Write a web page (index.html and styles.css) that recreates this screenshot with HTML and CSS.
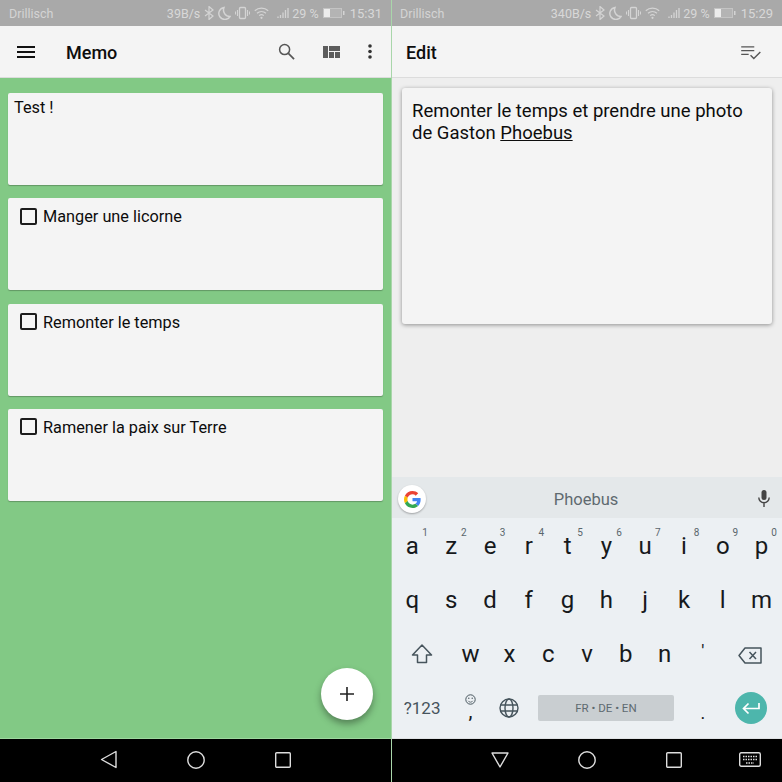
FILE: index.html
```html
<!DOCTYPE html>
<html lang="fr">
<head>
<meta charset="utf-8">
<title>Memo</title>
<link rel="stylesheet" href="styles.css">
</head>
<body>
<div class="screens">
  <section class="phone">
    <div class="status">
      <span class="carrier">Drillisch</span>
      <div class="status-right">
        <span>39B/s</span>
        <svg class="st" width="10" height="14" viewBox="0 0 10 14"><path d="M1 4l8 6-4 3.500V.5l4 3.500-8 6" fill="none" stroke="#d4d4d4" stroke-width="1.200"/></svg>
        <svg class="st" width="13" height="14" viewBox="0 0 13 14"><path d="M6 1.500a6 6 0 1 0 6 9 6.500 6.500 0 0 1-6-9z" fill="none" stroke="#d4d4d4" stroke-width="1.500"/></svg>
        <svg class="st" width="15" height="14" viewBox="0 0 15 14"><rect x="4.500" y="1.500" width="6" height="11" rx="1" fill="none" stroke="#d4d4d4" stroke-width="1.300"/><path d="M2.500 4v6M.5 5.500v3M12.500 4v6M14.500 5.500v3" stroke="#d4d4d4" stroke-width="1.100"/></svg>
        <svg class="st wifi" width="15" height="12" viewBox="0 0 15 12"><path d="M.8 3.800a10 10 0 0 1 13.400 0M3 6.200a7 7 0 0 1 9 0M5.200 8.600a3.600 3.600 0 0 1 4.600 0" fill="none" stroke="#d4d4d4" stroke-width="1.200"/><circle cx="7.500" cy="10.800" r="1.100" fill="#d4d4d4"/></svg>
        <svg class="st signal" width="12" height="12" viewBox="0 0 12 12"><path d="M1 11v-1.500M3.500 11V8M6 11V5.500M8.500 11V3M11 11V1" stroke="#d4d4d4" stroke-width="1.300"/></svg>
        <span class="pct">29 %</span>
        <svg class="st batt" width="22" height="10" viewBox="0 0 22 10"><rect x=".5" y=".5" width="18" height="9" fill="#b4b4b4" stroke="#c4c4c4"/><rect x="1" y="1" width="6" height="8" fill="#ececec"/><rect x="20" y="3" width="1.500" height="4" fill="#d4d4d4"/></svg>
        <span class="clock">15:31</span>
      </div>
    </div>
    <header class="appbar">
      <svg class="menu-icon" width="18" height="12" viewBox="0 0 18 12"><path d="M0 1h18M0 6h18M0 11h18" stroke="#111" stroke-width="1.800"/></svg>
      <h1 class="title memo-title">Memo</h1>
      <div class="actions">
        <svg width="17" height="17" viewBox="0 0 18 18"><circle cx="7" cy="7" r="5.300" fill="none" stroke="#555" stroke-width="1.600"/><path d="M11 11l6 6" stroke="#555" stroke-width="1.800"/></svg>
        <svg width="17" height="12" viewBox="0 0 17 12"><path d="M0 0h5v12H0zM6 0h11v5H6zM6 6h5v6H6zM12 6h5v6h-5z" fill="#5c5c5c"/></svg>
        <svg width="4" height="15" viewBox="0 0 4 15"><circle cx="2" cy="2" r="1.800" fill="#333"/><circle cx="2" cy="7.500" r="1.800" fill="#333"/><circle cx="2" cy="13" r="1.800" fill="#333"/></svg>
      </div>
    </header>
    <main class="board">
      <article class="note"><p class="note-plain">Test !</p></article>
      <article class="note"><label class="todo"><span class="box"></span>Manger une licorne</label></article>
      <article class="note"><label class="todo"><span class="box"></span>Remonter le temps</label></article>
      <article class="note"><label class="todo"><span class="box"></span>Ramener la paix sur Terre</label></article>
      <button class="fab" aria-label="Ajouter"><svg width="14" height="14" viewBox="0 0 14 14"><path d="M7 0v14M0 7h14" stroke="#222" stroke-width="1.600"/></svg></button>
    </main>
    <nav class="navbar">
      <span class="nav-item"><svg width="18" height="19" viewBox="0 0 18 19"><path d="M16 1.500v16L1.500 9.500z" fill="none" stroke="#ddd" stroke-width="1.400" stroke-linejoin="round"/></svg></span>
      <span class="nav-item"><svg width="18" height="18" viewBox="0 0 18 18"><circle cx="9" cy="9" r="8.200" fill="none" stroke="#ddd" stroke-width="1.400"/></svg></span>
      <span class="nav-item"><svg width="16" height="16" viewBox="0 0 16 16"><rect x=".7" y=".7" width="14.600" height="14.600" rx="1" fill="none" stroke="#ddd" stroke-width="1.400"/></svg></span>
    </nav>
  </section>

  <section class="phone phone-edit">
    <div class="status">
      <span class="carrier">Drillisch</span>
      <div class="status-right">
        <span>340B/s</span>
        <svg class="st" width="10" height="14" viewBox="0 0 10 14"><path d="M1 4l8 6-4 3.500V.5l4 3.500-8 6" fill="none" stroke="#d4d4d4" stroke-width="1.200"/></svg>
        <svg class="st" width="13" height="14" viewBox="0 0 13 14"><path d="M6 1.500a6 6 0 1 0 6 9 6.500 6.500 0 0 1-6-9z" fill="none" stroke="#d4d4d4" stroke-width="1.500"/></svg>
        <svg class="st" width="15" height="14" viewBox="0 0 15 14"><rect x="4.500" y="1.500" width="6" height="11" rx="1" fill="none" stroke="#d4d4d4" stroke-width="1.300"/><path d="M2.500 4v6M.5 5.500v3M12.500 4v6M14.500 5.500v3" stroke="#d4d4d4" stroke-width="1.100"/></svg>
        <svg class="st wifi" width="15" height="12" viewBox="0 0 15 12"><path d="M.8 3.800a10 10 0 0 1 13.400 0M3 6.200a7 7 0 0 1 9 0M5.200 8.600a3.600 3.600 0 0 1 4.600 0" fill="none" stroke="#d4d4d4" stroke-width="1.200"/><circle cx="7.500" cy="10.800" r="1.100" fill="#d4d4d4"/></svg>
        <svg class="st signal" width="12" height="12" viewBox="0 0 12 12"><path d="M1 11v-1.500M3.500 11V8M6 11V5.500M8.500 11V3M11 11V1" stroke="#d4d4d4" stroke-width="1.300"/></svg>
        <span class="pct">29 %</span>
        <svg class="st batt" width="22" height="10" viewBox="0 0 22 10"><rect x=".5" y=".5" width="18" height="9" fill="#b4b4b4" stroke="#c4c4c4"/><rect x="1" y="1" width="6" height="8" fill="#ececec"/><rect x="20" y="3" width="1.500" height="4" fill="#d4d4d4"/></svg>
        <span class="clock">15:29</span>
      </div>
    </div>
    <header class="appbar">
      <h1 class="title edit-title">Edit</h1>
      <div class="actions">
        <svg width="20" height="14" viewBox="0 0 21 15"><path d="M0 1h14M0 5h14M0 9h8" stroke="#555" stroke-width="1.400"/><path d="M10 10l3.500 3.500L20.500 6.500" fill="none" stroke="#555" stroke-width="1.500"/></svg>
      </div>
    </header>
    <main class="editor">
      <div class="sheet">Remonter le temps et prendre une photo de Gaston <u>Phoebus</u></div>
    </main>
    <div class="keyboard">
      <div class="suggest">
        <span class="g-badge"><svg width="17" height="17" viewBox="0 0 48 48"><path fill="#EA4335" d="M24 9.500c3.540 0 6.710 1.220 9.210 3.600l6.850-6.850C35.900 2.380 30.470 0 24 0 14.620 0 6.510 5.380 2.560 13.220l7.980 6.190C12.430 13.720 17.740 9.500 24 9.500z"/><path fill="#4285F4" d="M46.980 24.550c0-1.570-.15-3.090-.38-4.550H24v9.020h12.940c-.58 2.960-2.260 5.480-4.780 7.180l7.730 6c4.510-4.180 7.090-10.360 7.090-17.650z"/><path fill="#FBBC05" d="M10.530 28.590c-.48-1.450-.76-2.990-.76-4.590s.27-3.140.76-4.590l-7.980-6.190C.92 16.460 0 20.120 0 24c0 3.880.92 7.540 2.560 10.780l7.970-6.190z"/><path fill="#34A853" d="M24 48c6.480 0 11.930-2.130 15.890-5.810l-7.730-6c-2.150 1.450-4.920 2.300-8.160 2.300-6.260 0-11.570-4.220-13.470-9.910l-7.980 6.190C6.510 42.620 14.620 48 24 48z"/></svg></span>
        <span class="word">Phoebus</span>
        <svg class="mic" width="12" height="17" viewBox="0 0 12 17"><rect x="3.500" y="0" width="5" height="10" rx="2.500" fill="#444"/><path d="M.8 7.500a5.200 5.200 0 0 0 10.400 0M6 12.800V17" fill="none" stroke="#444" stroke-width="1.400"/></svg>
      </div>
      <div class="keys">
        <div class="row">
          <span class="key">a<sup>1</sup></span><span class="key">z<sup>2</sup></span><span class="key">e<sup>3</sup></span><span class="key">r<sup>4</sup></span><span class="key">t<sup>5</sup></span><span class="key">y<sup>6</sup></span><span class="key">u<sup>7</sup></span><span class="key">i<sup>8</sup></span><span class="key">o<sup>9</sup></span><span class="key">p<sup>0</sup></span>
        </div>
        <div class="row">
          <span class="key">q</span><span class="key">s</span><span class="key">d</span><span class="key">f</span><span class="key">g</span><span class="key">h</span><span class="key">j</span><span class="key">k</span><span class="key">l</span><span class="key">m</span>
        </div>
        <div class="row row-mixed">
          <span class="key"><svg width="22" height="20" viewBox="0 0 22 20"><path d="M11 1l9.500 10H15.500v7.500h-9V11H1.500z" fill="none" stroke="#46545c" stroke-width="1.500" stroke-linejoin="round"/></svg></span>
          <span class="key">w</span><span class="key">x</span><span class="key">c</span><span class="key">v</span><span class="key">b</span><span class="key">n</span><span class="key key-quote">'</span>
          <span class="key key-back"><svg width="24" height="17" viewBox="0 0 24 17"><path d="M7 1h16v15H7L1 8.500z" fill="none" stroke="#46545c" stroke-width="1.500" stroke-linejoin="round"/><path d="M11.500 5l6.500 7M18 5l-6.500 7" stroke="#46545c" stroke-width="1.500"/></svg></span>
        </div>
        <div class="row row-bottom">
          <span class="key key-sym">?123</span>
          <span class="key key-emoji"><svg width="11" height="11" viewBox="0 0 11 11"><circle cx="5.500" cy="5.500" r="4.700" fill="none" stroke="#46545c"/><circle cx="3.800" cy="4.300" r=".7" fill="#46545c"/><circle cx="7.200" cy="4.300" r=".7" fill="#46545c"/><path d="M3.200 6.800a2.600 2.600 0 0 0 4.600 0" fill="none" stroke="#46545c" stroke-width=".8"/></svg><span class="comma">,</span></span>
          <span class="key"><svg width="20" height="20" viewBox="0 0 20 20"><g fill="none" stroke="#46545c" stroke-width="1.400"><circle cx="10" cy="10" r="9"/><ellipse cx="10" cy="10" rx="4" ry="9"/><path d="M1.500 7h17M1.500 13h17"/></g></svg></span>
          <span class="space">FR • DE • EN</span>
          <span class="key key-dot">.</span>
          <span class="key key-return"><span class="enter"><svg width="18" height="13" viewBox="0 0 18 13"><path d="M17 1v5.500H2M6.500 1.500l-5 5 5 5" fill="none" stroke="#fff" stroke-width="1.700"/></svg></span></span>
        </div>
      </div>
    </div>
    <nav class="navbar">
      <span class="nav-item"><svg width="18" height="16" viewBox="0 0 18 16"><path d="M1 1h16L9 15z" fill="none" stroke="#ddd" stroke-width="1.400" stroke-linejoin="round"/></svg></span>
      <span class="nav-item"><svg width="18" height="18" viewBox="0 0 18 18"><circle cx="9" cy="9" r="8.200" fill="none" stroke="#ddd" stroke-width="1.400"/></svg></span>
      <span class="nav-item"><svg width="16" height="16" viewBox="0 0 16 16"><rect x=".7" y=".7" width="14.600" height="14.600" rx="1" fill="none" stroke="#ddd" stroke-width="1.400"/></svg></span>
      <span class="nav-item nav-kbd"><svg width="22" height="15" viewBox="0 0 22 15"><rect x=".7" y=".7" width="20.600" height="13.600" rx="1.500" fill="none" stroke="#ddd" stroke-width="1.400"/><path d="M4 4.500h14M4 7.500h14M7 11h8" stroke="#ddd" stroke-width="1.300" stroke-dasharray="1.500 1"/></svg></span>
    </nav>
  </section>
</div>
</body>
</html>
```
FILE: styles.css
```css
* { box-sizing: border-box; }
html, body { margin: 0; padding: 0; }
body { background: #000; font-family: Roboto, "Liberation Sans", sans-serif; }
.screens { display: flex; width: 782px; height: 782px; overflow: hidden; }
.phone { width: 391px; height: 782px; display: flex; flex-direction: column; flex: none; }
.phone-edit { border-left: 1px solid #a9d6aa; }
.status {
  height: 26px; flex: none; background: #a9a9a9; color: #d8d8d8;
  font-size: 12.5px; display: flex; align-items: center; justify-content: space-between;
  padding: 0 9px;
}
.phone-edit .status { padding-left: 8px; }
.carrier { color: #d4d4d4; }
.status-right { display: flex; align-items: center; }
.st { margin-left: 4px; flex: none; }
.signal { margin-left: 8px; }
.pct { margin-left: 3px; }
.clock { margin-left: 5px; font-size: 13px; }
.appbar {
  height: 52px; flex: none; background: #f4f4f4; display: flex; align-items: center;
  border-bottom: 1px solid #dcdcdc;
}
.menu-icon { margin-left: 17px; }
.title { margin: 0; padding-top: 1px; font-size: 18px; font-weight: 500; color: #0d0d0d; }
.memo-title { margin-left: 31px; }
.edit-title { margin-left: 14px; }
.actions { margin-left: auto; display: flex; align-items: center; gap: 28px; padding-right: 19px; }
.phone-edit .actions { padding-right: 21px; margin-top: 2px; }
.board {
  flex: 1; background: #82c985; position: relative; padding: 14.800px 8px 0;
  display: flex; flex-direction: column; gap: 13.400px; border-bottom: 1px solid #9ed89f;
}
.note {
  height: 92px; background: #f4f4f4; border-radius: 2px; flex: none;
  box-shadow: 0 1px 1px rgba(0, 0, 0, .25); color: #0c0c0c; font-size: 16.300px;
}
.note-plain { margin: 0; padding: 5px 6px; line-height: 20px; }
.todo { display: flex; align-items: center; padding: 9px 12px; line-height: 20px; }
.box {
  width: 17px; height: 17px; border: 2px solid #1c1c1c; border-radius: 2px;
  margin-right: 6px; flex: none; margin-top: -2px;
}
.fab {
  position: absolute; left: 321px; top: 590px; width: 52px; height: 52px; padding: 0;
  border: 0; border-radius: 50%; background: #fff;
  box-shadow: 0 4px 7px rgba(0, 0, 0, .35);
  display: flex; align-items: center; justify-content: center;
}
.navbar { height: 43px; flex: none; background: #000; display: flex; align-items: center; padding-left: 65px; }
.phone-edit .navbar { padding-left: 64px; }
.nav-item { width: 87px; flex: none; display: flex; justify-content: center; margin-top: -2px; }
.nav-kbd { margin-left: -11px; }
.editor { flex: 1; background: #eeeeee; padding: 10px 10px 0; }
.sheet {
  height: 236px; background: #f4f4f4; border-radius: 3px; padding: 12px 10px;
  box-shadow: 0 1px 4px rgba(0, 0, 0, .4);
  font-size: 18.500px; line-height: 22px; color: #0d0d0d;
}
.keyboard { flex: none; background: #ecf0f3; border-bottom: 1px solid #dfe2e4; }
.suggest { height: 41px; background: #e4e8ea; display: flex; align-items: center; position: relative; }
.g-badge {
  position: absolute; left: 6px; top: 8px; width: 28px; height: 28px; border-radius: 50%;
  background: #fff; box-shadow: 0 1px 2px rgba(0, 0, 0, .3);
  display: flex; align-items: center; justify-content: center;
}
.word { margin: 0 auto; padding: 4px 2px 0 0; font-size: 16.500px; color: #5f6a70; }
.mic { position: absolute; right: 12px; top: 13px; }
.keys { padding: 1px 1px 3px 1px; }
.row { display: grid; grid-template-columns: repeat(10, 1fr); height: 54px; }
.row-mixed { grid-template-columns: 1.500fr repeat(7, 1fr) 1.500fr; }
.row-bottom { grid-template-columns: 1.500fr 1fr 1fr 4fr 1fr 1.500fr; }
.key {
  position: relative; display: flex; align-items: center; justify-content: center;
  font-size: 24px; color: #16191b;
}
.key sup { position: absolute; right: 4px; top: 8px; font-size: 10px; line-height: 12px; color: #5a666c; }
.key-quote { font-size: 18px; align-items: flex-start; padding: 14px 1px 0 0; }
.key-back { padding-right: 3px; padding-top: 2px; }
.key-sym { font-size: 17px; color: #46545c; }
.key-emoji { flex-direction: column; padding-bottom: 3px; }
.comma { font-size: 18px; line-height: 14px; font-weight: 500; }
.key-dot { font-size: 18px; padding: 8px 1px 0 0; }
.key-return { padding-right: 1px; }
.space {
  align-self: center; height: 26px; margin: 0 10px 0 9px; background: #c9ced1; border-radius: 2px;
  font-size: 11.500px; color: #5e6a70; display: flex; align-items: center; justify-content: center;
}
.enter {
  width: 32px; height: 32px; border-radius: 50%; background: #4db6ac;
  display: flex; align-items: center; justify-content: center;
}
```
